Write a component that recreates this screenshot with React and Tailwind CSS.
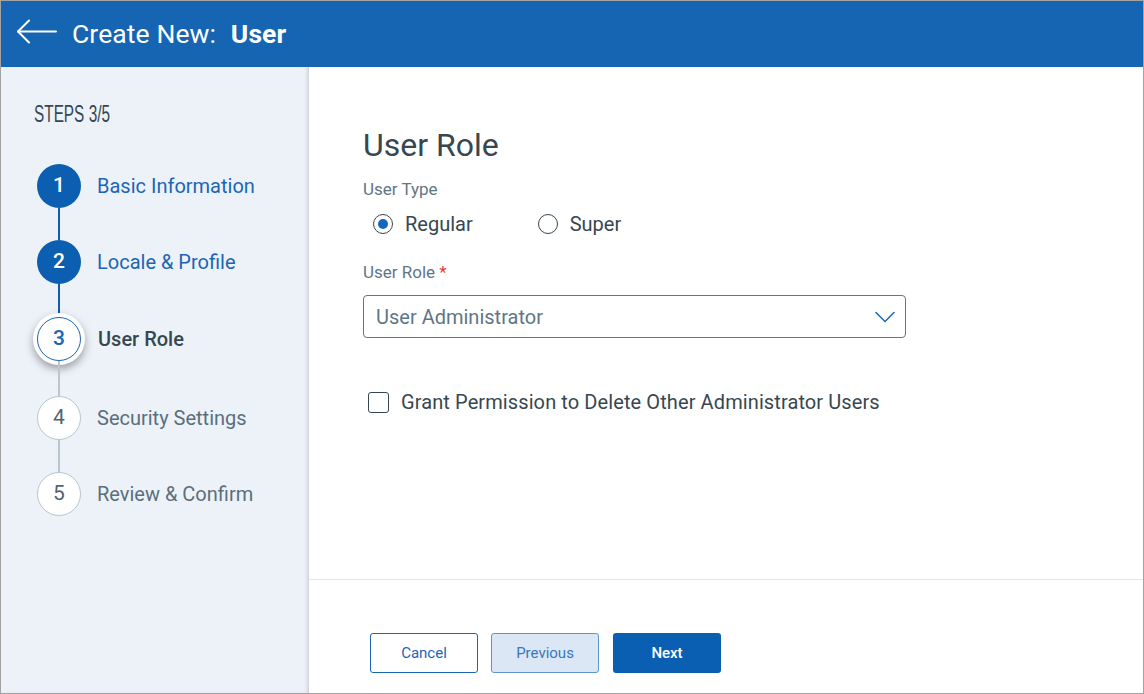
import { useState } from 'react'

const steps = [
  { n: 1, label: 'Basic Information', state: 'done' },
  { n: 2, label: 'Locale & Profile', state: 'done' },
  { n: 3, label: 'User Role', state: 'current' },
  { n: 4, label: 'Security Settings', state: 'todo' },
  { n: 5, label: 'Review & Confirm', state: 'todo' },
]

function StepCircle({ n, state }) {
  if (state === 'done') {
    return (
      <div className="flex h-[44px] w-[44px] items-center justify-center rounded-full bg-[#0b5eb0] text-[21px] font-medium text-white">
        {n}
      </div>
    )
  }
  if (state === 'current') {
    return (
      <div className="flex h-[52px] w-[52px] shrink-0 items-center justify-center rounded-full bg-white shadow-[0_4px_8px_rgba(0,0,0,0.35)]">
        <div className="flex h-[44px] w-[44px] items-center justify-center rounded-full border border-[#1a66b5] text-[21px] font-medium text-[#1a66b5]">
          {n}
        </div>
      </div>
    )
  }
  return (
    <div className="flex h-[44px] w-[44px] items-center justify-center rounded-full border border-[#b8c6d0] bg-white text-[21px] text-[#4f6472]">
      {n}
    </div>
  )
}

function Sidebar() {
  return (
    <aside className="relative w-[308px] shrink-0 bg-[#edf2f9] shadow-[inset_-3px_0_4px_-2px_rgba(0,0,0,0.18)]">
      <div className="pl-[33px] pt-[35px]">
        <div className="origin-left scale-x-[0.64] whitespace-nowrap text-[24px] leading-[24px] text-[#37474f] [font-family:'Liberation_Sans',sans-serif]">
          STEPS 3/5
        </div>
      </div>
      <div className="mt-[38px] pl-[36px]">
        {steps.map((s, i) => (
          <div key={s.n}>
            <div className="flex h-[44px] items-center">
              <div className="flex w-[44px] justify-center">
                <StepCircle n={s.n} state={s.state} />
              </div>
              <span
                className={
                  'text-[20px] ' +
                  (s.state === 'done'
                    ? 'ml-[16px] text-[#1a66b5]'
                    : s.state === 'current'
                      ? 'ml-[17px] font-medium text-[#37474f]'
                      : 'ml-[16px] text-[#5a6f7d]')
                }
              >
                {s.label}
              </span>
            </div>
            {i < steps.length - 1 && (
              <div className="flex w-[44px] justify-center">
                <div
                  className={
                    'w-[2px] ' +
                    (i < 2 ? 'bg-[#0b5eb0]' : 'bg-[#b8c6d0]') +
                    (i === 2 ? ' h-[35px]' : i === 1 ? ' h-[33px]' : ' h-[32px]')
                  }
                />
              </div>
            )}
          </div>
        ))}
      </div>
    </aside>
  )
}

export default function App() {
  const [type, setType] = useState('regular')
  const [grant, setGrant] = useState(false)

  return (
    <div className="flex h-[694px] w-[1144px] flex-col border border-[#a3a3a3] bg-white [font-family:Roboto,'Liberation_Sans',sans-serif]">
      <header className="flex h-[66px] shrink-0 items-center bg-[#1565b3] pl-[15px] text-white">
        <svg className="mb-[5px]" width="41" height="25" viewBox="0 0 41 25" fill="none" stroke="white" strokeWidth="2" strokeLinecap="round" strokeLinejoin="round">
          <path d="M40 12.5H2" />
          <path d="M13 1.5L2 12.5l11 11" />
        </svg>
        <h1 className="ml-[15px] text-[26.5px] tracking-[0.1px]">
          Create New: <span className="ml-[8px] font-bold">User</span>
        </h1>
      </header>

      <div className="flex min-h-0 flex-1">
        <Sidebar />

        <main className="flex flex-1 flex-col">
          <section className="h-[513px] shrink-0 border-b border-[#dfe6ee] pl-[54px] pt-[60px]">
            <h2 className="text-[32px] leading-[36px] text-[#37474f]">User Role</h2>
            <div className="mt-[16px] text-[17px] leading-[20px] text-[#5f7685]">User Type</div>
            <div className="mt-[13px] flex h-[24px] items-center pl-[10px]">
              <button type="button" onClick={() => setType('regular')} className="flex items-center">
                <span className="flex h-[20px] w-[20px] items-center justify-center rounded-full border border-[#37474f]">
                  {type === 'regular' && <span className="h-[10px] w-[10px] rounded-full bg-[#1565c0]" />}
                </span>
                <span className="ml-[12px] text-[20px] text-[#37474f]">Regular</span>
              </button>
              <button type="button" onClick={() => setType('super')} className="ml-[65px] flex items-center">
                <span className="flex h-[20px] w-[20px] items-center justify-center rounded-full border border-[#37474f]">
                  {type === 'super' && <span className="h-[10px] w-[10px] rounded-full bg-[#1565c0]" />}
                </span>
                <span className="ml-[12px] text-[20px] text-[#37474f]">Super</span>
              </button>
            </div>

            <div className="mt-[26px] text-[17px] leading-[20px] text-[#5f7685]">
              User Role <span className="text-[#e53935]">*</span>
            </div>
            <div className="mt-[13px] flex h-[43px] w-[543px] items-center justify-between rounded-[4px] border border-[#5f7685] pl-[12px] pr-[10px]">
              <span className="text-[20px] text-[#5f7685]">User Administrator</span>
              <svg width="20" height="12" viewBox="0 0 20 12" fill="none" stroke="#1a66b5" strokeWidth="1.5" strokeLinecap="round" strokeLinejoin="round">
                <path d="M1 1.5l9 9 9-9" />
              </svg>
            </div>

            <button type="button" onClick={() => setGrant(!grant)} className="mt-[52px] flex h-[24px] items-center pl-[5px]">
              <span className="flex h-[21px] w-[21px] items-center justify-center rounded-[3px] border border-[#37474f]">
                {grant && <span className="h-[11px] w-[11px] bg-[#1565c0]" />}
              </span>
              <span className="ml-[12px] text-[20px] tracking-[0.1px] text-[#37474f]">Grant Permission to Delete Other Administrator Users</span>
            </button>
          </section>

          <footer className="flex pl-[61px] pt-[53px]">
            <button className="h-[40px] w-[108px] rounded-[3px] border border-[#1a66b5] bg-white text-[15px] text-[#1a66b5]">Cancel</button>
            <button className="ml-[13px] h-[40px] w-[108px] rounded-[3px] border border-[#5c95d0] bg-[#dbe7f4] text-[15px] text-[#3a78bd]">Previous</button>
            <button className="ml-[14px] h-[40px] w-[108px] rounded-[3px] bg-[#0b5fb3] text-[15px] font-medium text-white">Next</button>
          </footer>
        </main>
      </div>
    </div>
  )
}
